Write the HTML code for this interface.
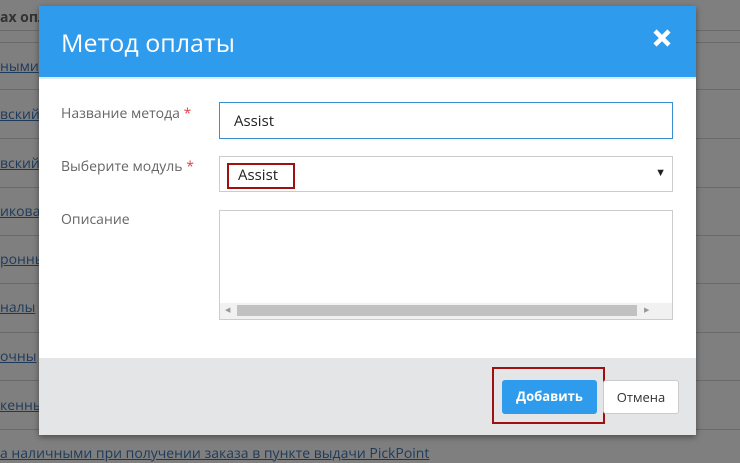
<!DOCTYPE html>
<html><head><meta charset="utf-8"><style>
*{margin:0;padding:0;box-sizing:border-box}
body{width:740px;height:452px;overflow:hidden;background:#7f7f7f;font-family:"Open Sans","Liberation Sans","DejaVu Sans",sans-serif;position:relative}
.ln{position:absolute;left:0;width:740px;height:1px;background:#6a6a6a}
.bt{position:absolute;left:0;font-size:14px;color:#1e3a5a;text-decoration:underline}
.modal{position:absolute;left:39px;top:6px;width:657px;height:429px;background:#fff;box-shadow:0 2px 6px rgba(0,0,0,.4)}
.hd{height:73px;background:#2f9bec;border-bottom:2px solid #d8ecfb;position:relative}
.hd h1{position:absolute;left:22px;top:20px;font-weight:normal;font-size:25px;color:#fff}
.x{position:absolute;right:24px;top:22px}
.lbl{position:absolute;left:22px;font-size:14px;color:#666}
.lbl b{color:#e04444;font-weight:normal}
.inp{position:absolute;left:180px;width:454px;border:1px solid #ccc;background:#fff;font-size:15px;color:#222}
.ft{position:absolute;left:0;top:352px;width:657px;height:77px;background:#e4e5e7}
.btn{position:absolute;top:374px;height:34px;border-radius:3px;font-size:13px;text-align:center;line-height:33px}
</style></head><body>
<div class="ln" style="top:30px"></div><div class="ln" style="top:42px"></div>
<div class="ln" style="top:89px"></div><div class="ln" style="top:138px"></div>
<div class="ln" style="top:187px"></div><div class="ln" style="top:235px"></div>
<div class="ln" style="top:283px"></div><div class="ln" style="top:332px"></div>
<div class="ln" style="top:380px"></div><div class="ln" style="top:429px"></div>
<div class="bt" style="top:8px;text-decoration:none;font-weight:bold;color:#333">ах опл</div>
<div class="bt" style="top:57px">ными</div><div class="bt" style="top:105px">вский</div>
<div class="bt" style="top:154px">вский</div><div class="bt" style="top:202px">икова</div>
<div class="bt" style="top:250px">ронны</div><div class="bt" style="top:298px">налы</div>
<div class="bt" style="top:347px">очны</div><div class="bt" style="top:396px">кенны</div>
<div class="bt" style="top:444px">а наличными при получении заказа в пункте выдачи PickPoint</div>
<div class="modal">
<div class="hd"><h1>Метод оплаты</h1>
<svg class="x" width="20" height="20" viewBox="0 0 20 20"><path d="M3 3L17 17M17 3L3 17" stroke="#fff" stroke-width="4.5"/></svg></div>
<div class="lbl" style="top:98px">Название метода <b>*</b></div>
<div class="lbl" style="top:151px">Выберите модуль <b>*</b></div>
<div class="lbl" style="top:204px">Описание</div>
<div class="inp" style="top:96px;height:37px;border-color:#3a8fd0;padding:8px 14px">Assist</div>
<div class="inp" style="top:150px;height:36px;padding:8px 18px">Assist
<span style="position:absolute;left:7px;top:6px;width:68px;height:26px;border:2px solid #a01010"></span>
<span style="position:absolute;right:6px;top:8px;font-size:11px">▼</span></div>
<div class="inp" style="top:204px;height:110px">
<div style="position:absolute;left:0;bottom:0;width:452px;height:16px;background:#f1f1f1"></div>
<div style="position:absolute;left:17px;bottom:3px;width:400px;height:11px;background:#c1c1c1"></div>
<div style="position:absolute;left:5px;bottom:4px;font-size:7px;color:#999">◀</div>
<div style="position:absolute;left:424px;bottom:4px;font-size:7px;color:#999">▶</div>
</div>
<div class="ft"></div>
<div style="position:absolute;left:453px;top:361px;width:113px;height:57px;border:2px solid #a01010"></div>
<div class="btn" style="left:463px;width:95px;background:#2f9bec;color:#fff;font-weight:bold">Добавить</div>
<div class="btn" style="left:564px;width:76px;background:#fff;border:1px solid #ccc;color:#333">Отмена</div>
</div>
</body></html>
